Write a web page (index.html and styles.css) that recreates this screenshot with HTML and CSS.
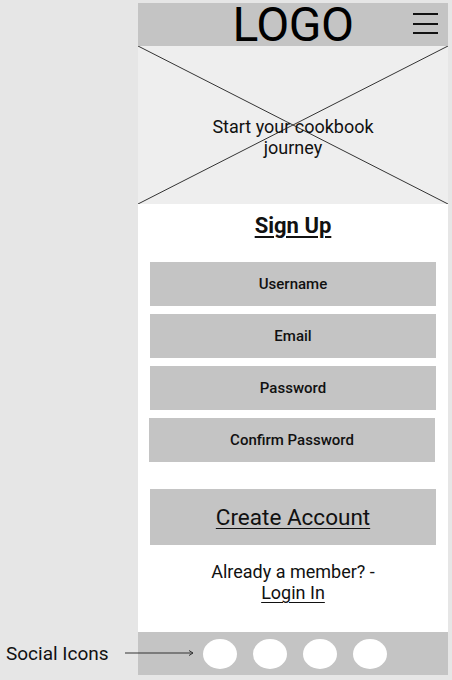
FILE: index.html
```html
<!DOCTYPE html>
<html lang="en">
<head>
<meta charset="utf-8">
<title>Sign Up</title>
<link rel="stylesheet" href="styles.css">
</head>
<body>
<div class="page">
  <aside class="annot">
    <div class="annot-label">
      Social Icons
      <svg class="arrow" width="70" height="8" viewBox="0 0 70 8" aria-hidden="true">
        <line x1="0" y1="4" x2="68" y2="4" stroke="#333" stroke-width="1"/>
        <polyline points="64,1.5 68,4 64,6.5" fill="none" stroke="#333" stroke-width="1"/>
      </svg>
    </div>
  </aside>
  <main class="frame">
    <header class="topbar">
      <span></span>
      <div class="logo">LOGO</div>
      <div class="burger" aria-label="Menu"><i></i><i></i><i></i></div>
    </header>
    <section class="hero">
      <svg class="cross" viewBox="0 0 100 100" preserveAspectRatio="none" aria-hidden="true">
        <line x1="0" y1="0" x2="100" y2="100" stroke="#333" stroke-width="1" vector-effect="non-scaling-stroke"/>
        <line x1="100" y1="0" x2="0" y2="100" stroke="#333" stroke-width="1" vector-effect="non-scaling-stroke"/>
      </svg>
      <p class="hero-text">Start your cookbook journey</p>
    </section>
    <section class="form">
      <h1 class="title">Sign Up</h1>
      <div class="fields">
        <div class="field">Username</div>
        <div class="field">Email</div>
        <div class="field">Password</div>
        <div class="field confirm">Confirm Password</div>
      </div>
      <div class="create"><span>Create Account</span></div>
      <p class="member">Already a member? -<br><span class="login">Login In</span></p>
    </section>
    <footer class="social">
      <span class="dot"></span>
      <span class="dot"></span>
      <span class="dot"></span>
      <span class="dot"></span>
    </footer>
  </main>
</div>
</body>
</html>
```
FILE: styles.css
```css
* { box-sizing: border-box; }
html, body { margin: 0; padding: 0; }
body {
  background: #e6e6e6;
  font-family: Roboto, "Liberation Sans", Arial, sans-serif;
  color: #111;
  width: 452px;
  height: 680px;
  overflow: hidden;
}
.page {
  display: flex;
  padding-top: 3px;
  height: 680px;
}
.annot {
  width: 138px;
  flex: none;
  display: flex;
  flex-direction: column;
  justify-content: flex-end;
  padding-bottom: 5px;
}
.annot-label {
  position: relative;
  height: 43px;
  line-height: 43px;
  padding-left: 6px;
  font-size: 19px;
  color: #111;
  white-space: nowrap;
}
.arrow {
  position: absolute;
  left: 125px;
  top: 17px;
  z-index: 2;
}
.frame {
  width: 310px;
  height: 672px;
  flex: none;
  display: flex;
  flex-direction: column;
  background: #fff;
}
.topbar {
  height: 43px;
  flex: none;
  background: #c4c4c4;
  display: grid;
  grid-template-columns: 1fr auto 1fr;
  align-items: start;
}
.logo {
  font-size: 48px;
  line-height: 43px;
  color: #000;
  letter-spacing: -0.5px;
}
.burger {
  justify-self: end;
  margin-right: 10px;
  padding-top: 10px;
  display: flex;
  flex-direction: column;
  gap: 7.5px;
}
.burger i {
  display: block;
  width: 25px;
  height: 2px;
  background: #111;
}
.hero {
  position: relative;
  height: 158px;
  flex: none;
  background: #eeeeee;
  padding-top: 70px;
}
.cross {
  position: absolute;
  left: 0;
  top: 0;
  width: 100%;
  height: 100%;
}
.hero-text {
  position: relative;
  margin: 0 auto;
  width: 175px;
  text-align: center;
  font-size: 18px;
  line-height: 21px;
  color: #111;
}
.form {
  flex: 1;
  padding: 9px 12px 0;
  display: flex;
  flex-direction: column;
}
.title {
  margin: 0;
  text-align: center;
  font-size: 22px;
  line-height: 26px;
  font-weight: 700;
  text-decoration: underline;
  text-underline-offset: 3px;
  color: #111;
}
.fields {
  margin-top: 23px;
  display: flex;
  flex-direction: column;
  gap: 8px;
}
.field {
  height: 44px;
  background: #c4c4c4;
  display: flex;
  align-items: center;
  justify-content: center;
  font-size: 15px;
  font-weight: 500;
  color: #111;
}
.field.confirm { margin: 0 1px 0 -1px; }
.create {
  margin-top: 27px;
  height: 56px;
  background: #c4c4c4;
  display: flex;
  align-items: center;
  justify-content: center;
  font-size: 22.5px;
  color: #111;
}
.create span {
  text-decoration: underline;
  text-underline-offset: 3px;
  text-decoration-thickness: 1px;
}
.member {
  margin: 16px 0 0;
  text-align: center;
  font-size: 18px;
  line-height: 21px;
  color: #111;
}
.login {
  text-decoration: underline;
  text-underline-offset: 3px;
  text-decoration-thickness: 1px;
}
.social {
  height: 43px;
  flex: none;
  background: #c4c4c4;
  display: flex;
  align-items: center;
  padding-left: 65px;
  gap: 16px;
}
.dot {
  width: 34px;
  height: 30px;
  border-radius: 50%;
  background: #fff;
}
```
